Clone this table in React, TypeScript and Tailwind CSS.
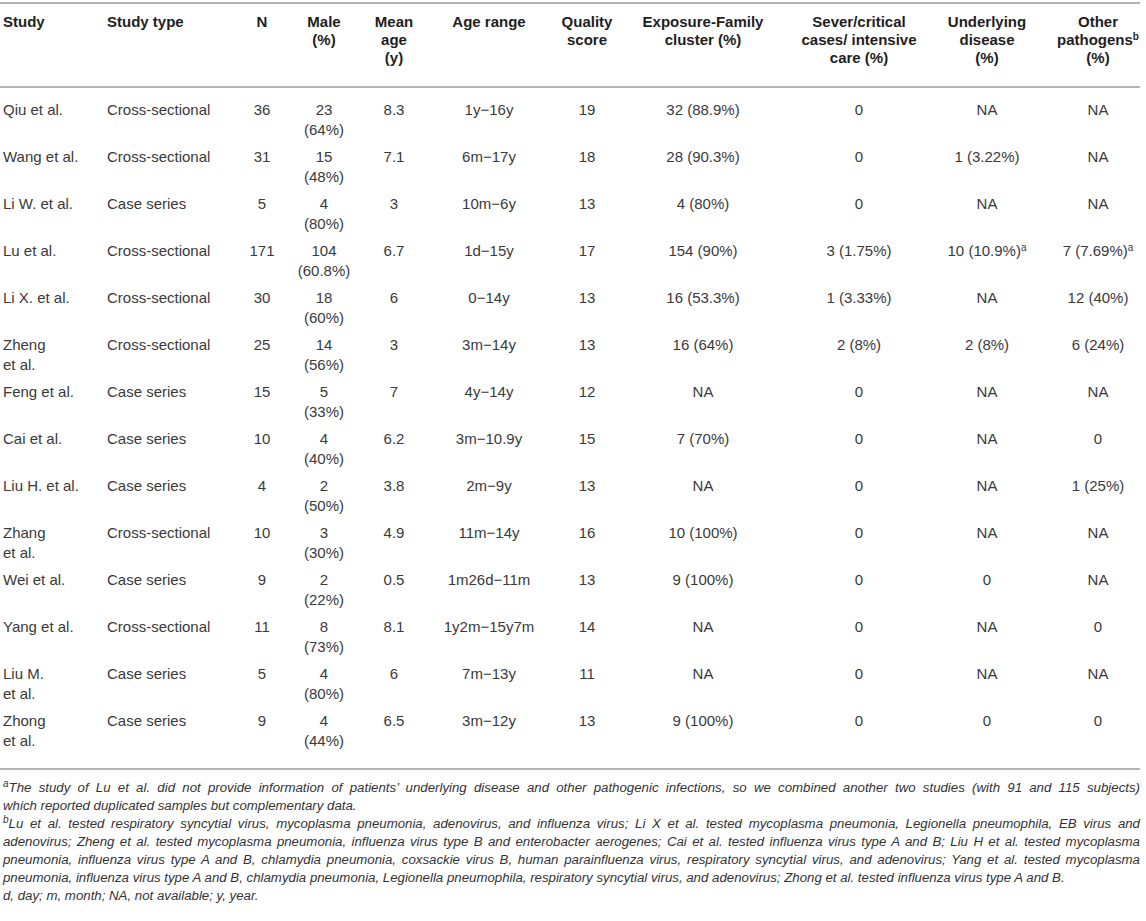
import React from "react";

type Row = {
  study: React.ReactNode;
  type: string;
  n: string;
  male: [string, string];
  mean: string;
  range: string;
  q: string;
  exp: string;
  sev: string;
  und: React.ReactNode;
  oth: React.ReactNode;
};

const sup = (s: string) => <sup className="text-[10px]">{s}</sup>;

const rows: Row[] = [
  { study: "Qiu et al.", type: "Cross-sectional", n: "36", male: ["23", "(64%)"], mean: "8.3", range: "1y−16y", q: "19", exp: "32 (88.9%)", sev: "0", und: "NA", oth: "NA" },
  { study: "Wang et al.", type: "Cross-sectional", n: "31", male: ["15", "(48%)"], mean: "7.1", range: "6m−17y", q: "18", exp: "28 (90.3%)", sev: "0", und: "1 (3.22%)", oth: "NA" },
  { study: "Li W. et al.", type: "Case series", n: "5", male: ["4", "(80%)"], mean: "3", range: "10m−6y", q: "13", exp: "4 (80%)", sev: "0", und: "NA", oth: "NA" },
  { study: "Lu et al.", type: "Cross-sectional", n: "171", male: ["104", "(60.8%)"], mean: "6.7", range: "1d−15y", q: "17", exp: "154 (90%)", sev: "3 (1.75%)", und: <>10 (10.9%){sup("a")}</>, oth: <>7 (7.69%){sup("a")}</> },
  { study: "Li X. et al.", type: "Cross-sectional", n: "30", male: ["18", "(60%)"], mean: "6", range: "0−14y", q: "13", exp: "16 (53.3%)", sev: "1 (3.33%)", und: "NA", oth: "12 (40%)" },
  { study: <>Zheng<br />et al.</>, type: "Cross-sectional", n: "25", male: ["14", "(56%)"], mean: "3", range: "3m−14y", q: "13", exp: "16 (64%)", sev: "2 (8%)", und: "2 (8%)", oth: "6 (24%)" },
  { study: "Feng et al.", type: "Case series", n: "15", male: ["5", "(33%)"], mean: "7", range: "4y−14y", q: "12", exp: "NA", sev: "0", und: "NA", oth: "NA" },
  { study: "Cai et al.", type: "Case series", n: "10", male: ["4", "(40%)"], mean: "6.2", range: "3m−10.9y", q: "15", exp: "7 (70%)", sev: "0", und: "NA", oth: "0" },
  { study: "Liu H. et al.", type: "Case series", n: "4", male: ["2", "(50%)"], mean: "3.8", range: "2m−9y", q: "13", exp: "NA", sev: "0", und: "NA", oth: "1 (25%)" },
  { study: <>Zhang<br />et al.</>, type: "Cross-sectional", n: "10", male: ["3", "(30%)"], mean: "4.9", range: "11m−14y", q: "16", exp: "10 (100%)", sev: "0", und: "NA", oth: "NA" },
  { study: "Wei et al.", type: "Case series", n: "9", male: ["2", "(22%)"], mean: "0.5", range: "1m26d−11m", q: "13", exp: "9 (100%)", sev: "0", und: "0", oth: "NA" },
  { study: "Yang et al.", type: "Cross-sectional", n: "11", male: ["8", "(73%)"], mean: "8.1", range: "1y2m−15y7m", q: "14", exp: "NA", sev: "0", und: "NA", oth: "0" },
  { study: <>Liu M.<br />et al.</>, type: "Case series", n: "5", male: ["4", "(80%)"], mean: "6", range: "7m−13y", q: "11", exp: "NA", sev: "0", und: "NA", oth: "NA" },
  { study: <>Zhong<br />et al.</>, type: "Case series", n: "9", male: ["4", "(44%)"], mean: "6.5", range: "3m−12y", q: "13", exp: "9 (100%)", sev: "0", und: "0", oth: "0" },
];

const th = "align-top font-bold text-[#1e1e1e] pt-[9px] pb-[19px] leading-[18px]";
const td = "align-top pt-[4px] pb-[3px] leading-[20px]";

export default function App() {
  return (
    <div
      className="w-[1146px] h-[921px] bg-white text-[#3a3a3a] overflow-hidden"
      style={{ fontFamily: '"Liberation Sans", Arial, sans-serif' }}
    >
      <div className="w-[1140px] pt-[2px]">
        <table className="table-fixed w-[1140px] border-collapse text-[15px]">
          <colgroup>
            <col className="w-[104px]" />
            <col className="w-[128px]" />
            <col className="w-[60px]" />
            <col className="w-[64px]" />
            <col className="w-[76px]" />
            <col className="w-[114px]" />
            <col className="w-[82px]" />
            <col className="w-[150px]" />
            <col className="w-[162px]" />
            <col className="w-[94px]" />
            <col className="w-[106px]" />
          </colgroup>
          <thead>
            <tr className="border-t-2 border-b-2 border-[#b4b4b4]">
              <th className={`${th} text-left pl-[3px]`}>Study</th>
              <th className={`${th} text-left pl-[3px]`}>Study type</th>
              <th className={`${th} text-center`}>N</th>
              <th className={`${th} text-center`}>Male<br />(%)</th>
              <th className={`${th} text-center`}>Mean<br />age<br />(y)</th>
              <th className={`${th} text-center`}>Age range</th>
              <th className={`${th} text-center`}>Quality<br />score</th>
              <th className={`${th} text-center whitespace-nowrap`}>Exposure-Family<br />cluster (%)</th>
              <th className={`${th} text-center whitespace-nowrap`}>Sever/critical<br />cases/ intensive<br />care (%)</th>
              <th className={`${th} text-center whitespace-nowrap`}>Underlying<br />disease<br />(%)</th>
              <th className={`${th} text-center whitespace-nowrap pl-[22px]`}>Other<br />pathogens{sup("b")}<br />(%)</th>
            </tr>
          </thead>
          <tbody className="border-b-2 border-[#b4b4b4]">
            <tr><td colSpan={11} className="h-[9px] p-0" /></tr>
            {rows.map((r, i) => (
              <tr key={i}>
                <td className={`${td} pl-[3px] whitespace-nowrap`}>{r.study}</td>
                <td className={`${td} pl-[3px] whitespace-nowrap`}>{r.type}</td>
                <td className={`${td} text-center`}>{r.n}</td>
                <td className={`${td} text-center whitespace-nowrap`}>{r.male[0]}<br />{r.male[1]}</td>
                <td className={`${td} text-center`}>{r.mean}</td>
                <td className={`${td} text-center whitespace-nowrap`}>{r.range}</td>
                <td className={`${td} text-center`}>{r.q}</td>
                <td className={`${td} text-center whitespace-nowrap`}>{r.exp}</td>
                <td className={`${td} text-center whitespace-nowrap`}>{r.sev}</td>
                <td className={`${td} text-center whitespace-nowrap`}>{r.und}</td>
                <td className={`${td} text-center whitespace-nowrap pl-[22px]`}>{r.oth}</td>
              </tr>
            ))}
            <tr><td colSpan={11} className="h-[15px] p-0" /></tr>
          </tbody>
        </table>

        <div className="pt-[9px] pl-[3px] italic text-[13.25px] leading-[18px] text-[#333]">
          <div className="text-justify [text-align-last:justify]">
            {sup("a")}The study of Lu et al. did not provide information of patients’ underlying disease and other pathogenic infections, so we combined another two studies (with 91 and 115 subjects)
          </div>
          <div>which reported duplicated samples but complementary data.</div>
          <div className="text-justify [text-align-last:justify]">
            {sup("b")}Lu et al. tested respiratory syncytial virus, mycoplasma pneumonia, adenovirus, and influenza virus; Li X et al. tested mycoplasma pneumonia, Legionella pneumophila, EB virus and
          </div>
          <div className="text-justify [text-align-last:justify]">
            adenovirus; Zheng et al. tested mycoplasma pneumonia, influenza virus type B and enterobacter aerogenes; Cai et al. tested influenza virus type A and B; Liu H et al. tested mycoplasma
          </div>
          <div className="text-justify [text-align-last:justify]">
            pneumonia, influenza virus type A and B, chlamydia pneumonia, coxsackie virus B, human parainfluenza virus, respiratory syncytial virus, and adenovirus; Yang et al. tested mycoplasma
          </div>
          <div>
            pneumonia, influenza virus type A and B, chlamydia pneumonia, Legionella pneumophila, respiratory syncytial virus, and adenovirus; Zhong et al. tested influenza virus type A and B.
          </div>
          <div>d, day; m, month; NA, not available; y, year.</div>
        </div>
      </div>
    </div>
  );
}
